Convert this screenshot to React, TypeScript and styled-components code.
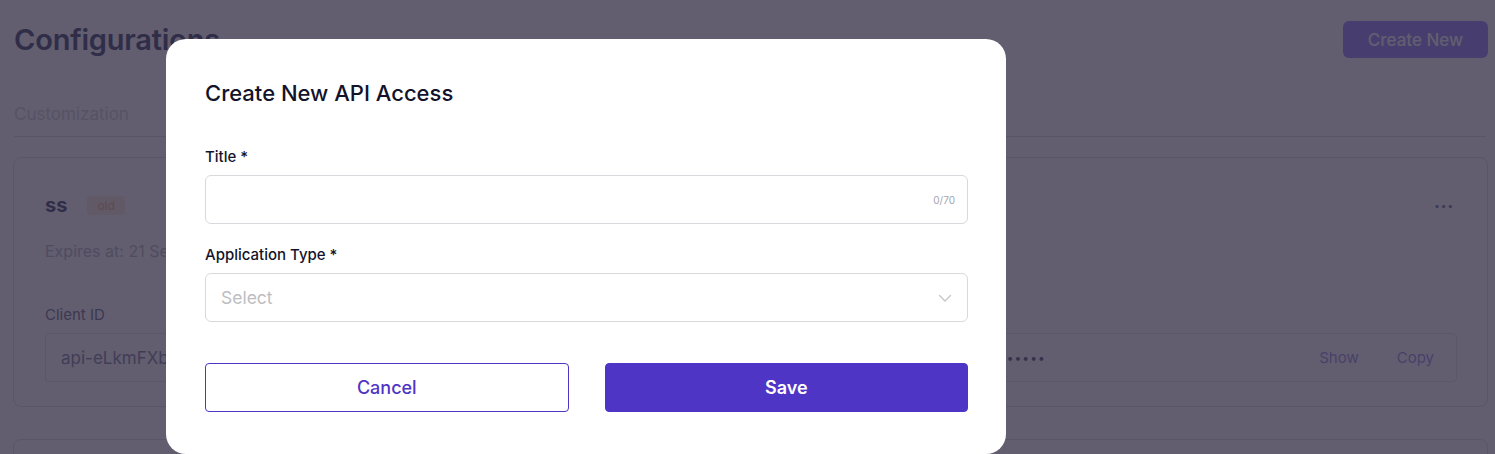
import * as React from 'react';
import styled, { createGlobalStyle } from 'styled-components';

const GlobalStyle = createGlobalStyle`
    html, body {
        margin: 0;
        padding: 0;
        background: #ffffff;
        font-family: 'Inter', 'Noto Sans', sans-serif;
        overflow: hidden;
    }
    * { box-sizing: border-box; }
`;

const ChevronDown = () => (
    <svg width="16" height="16" viewBox="0 0 16 16" fill="none">
        <path d="M2.5 5.5 8 11l5.5-5.5" stroke="#c4c4c8" strokeWidth="1.3" strokeLinecap="round" strokeLinejoin="round" />
    </svg>
);

const App = () => (
    <>
        <GlobalStyle />
        <StyledPage>
            <StyledHeader>
                <StyledHeading>Configurations</StyledHeading>
                <StyledCreateButton>Create New</StyledCreateButton>
            </StyledHeader>
            <StyledTabs>
                <StyledTab>Customization</StyledTab>
            </StyledTabs>
            <StyledCard>
                <StyledCardTop>
                    <StyledCardTitle>ss</StyledCardTitle>
                    <StyledBadge>old</StyledBadge>
                    <StyledMore>•••</StyledMore>
                </StyledCardTop>
                <StyledExpires>Expires at: 21 Sep</StyledExpires>
                <StyledFields>
                    <StyledFieldCol>
                        <StyledFieldLabel>Client ID</StyledFieldLabel>
                        <StyledValueBox>
                            <StyledValue>api-eLkmFXb2QhR7</StyledValue>
                        </StyledValueBox>
                    </StyledFieldCol>
                    <StyledFieldCol>
                        <StyledFieldLabel>Client Secret</StyledFieldLabel>
                        <StyledValueBox>
                            <StyledDots>••••••••••••••••••••••••••••••••••</StyledDots>
                            <StyledLink>Show</StyledLink>
                            <StyledLink>Copy</StyledLink>
                        </StyledValueBox>
                    </StyledFieldCol>
                </StyledFields>
            </StyledCard>
            <StyledCard />
        </StyledPage>

        <StyledOverlay>
            <StyledModal>
                <StyledModalTitle>Create New API Access</StyledModalTitle>
                <StyledFormGroup>
                    <StyledLabel>Title *</StyledLabel>
                    <StyledInputWrap>
                        <StyledInput />
                        <StyledCounter>0/70</StyledCounter>
                    </StyledInputWrap>
                </StyledFormGroup>
                <StyledFormGroup>
                    <StyledLabel>Application Type *</StyledLabel>
                    <StyledSelect>
                        <StyledPlaceholder>Select</StyledPlaceholder>
                        <ChevronDown />
                    </StyledSelect>
                </StyledFormGroup>
                <StyledActions>
                    <StyledButton type="button">Cancel</StyledButton>
                    <StyledButton type="button" primary>Save</StyledButton>
                </StyledActions>
            </StyledModal>
        </StyledOverlay>
    </>
);

export default App;

const StyledPage = styled.div`
    height: 454px;
    padding: 21px 7px 0 14px;
    overflow: hidden;
`;

const StyledHeader = styled.div`
    display: flex;
    align-items: center;
    justify-content: space-between;
    height: 37px;
`;

const StyledHeading = styled.h1`
    margin: 0;
    font-size: 29px;
    font-weight: 600;
    letter-spacing: -0.2px;
    color: #6c708c;
`;

const StyledCreateButton = styled.button`
    width: 145px;
    height: 37px;
    border: 0;
    border-radius: 6px;
    background: #b0a2ff;
    color: #ffffff;
    font-family: inherit;
    font-size: 17px;
    font-weight: 500;
`;

const StyledTabs = styled.div`
    display: flex;
    margin-top: 46px;
    margin-right: 2px;
    border-bottom: 1px solid #e4e4ea;
`;

const StyledTab = styled.div`
    padding-bottom: 12px;
    font-size: 17px;
    color: #dcdce4;
`;

const StyledCard = styled.div`
    margin-top: 20px;
    margin-left: -1px;
    height: 250px;
    padding: 35px 30px 0 31px;
    border: 1px solid #e6e6ee;
    border-radius: 8px;
    & + & {
        margin-top: 32px;
    }
`;

const StyledCardTop = styled.div`
    display: flex;
    align-items: center;
    gap: 20px;
    height: 24px;
`;

const StyledCardTitle = styled.div`
    font-size: 20px;
    font-weight: 700;
    color: #6e7190;
`;

const StyledBadge = styled.div`
    padding: 2px 10px;
    border-radius: 3px;
    background: #fff0e4;
    color: #f3c3a7;
    font-size: 12px;
`;

const StyledMore = styled.div`
    margin-left: auto;
    margin-right: 3px;
    font-size: 10px;
    letter-spacing: 1px;
    color: #9598b0;
`;

const StyledExpires = styled.div`
    margin-top: 24px;
    font-size: 16px;
    color: #c8c9d4;
`;

const StyledFields = styled.div`
    display: grid;
    grid-template-columns: 1fr 1fr;
    gap: 24px;
    margin-top: 44px;
`;

const StyledFieldCol = styled.div`
    display: flex;
    flex-direction: column;
    gap: 9px;
`;

const StyledFieldLabel = styled.div`
    font-size: 15px;
    color: #8f92a8;
`;

const StyledValueBox = styled.div`
    display: flex;
    align-items: center;
    height: 49px;
    padding: 0 22px 0 15px;
    border: 1px solid #eaeaf0;
    border-radius: 4px;
`;

const StyledValue = styled.div`
    font-size: 17px;
    color: #9da0b8;
`;

const StyledDots = styled.div`
    flex: 1;
    font-size: 12px;
    letter-spacing: 1.1px;
    color: #7c7f99;
`;

const StyledLink = styled.div`
    margin-left: 38px;
    font-size: 15px;
    color: #b4aaf0;
`;

const StyledOverlay = styled.div`
    position: fixed;
    inset: 0;
    background: rgba(16, 10, 36, 0.66);
`;

const StyledModal = styled.div`
    position: absolute;
    left: 166px;
    top: 39px;
    width: 840px;
    height: 415px;
    display: flex;
    flex-direction: column;
    padding: 40px 38px 0 39px;
    background: #ffffff;
    border-radius: 20px;
`;

const StyledModalTitle = styled.h2`
    margin: 0 0 41px;
    height: 28px;
    line-height: 28px;
    font-size: 22px;
    font-weight: 500;
    color: #13132b;
`;

const StyledFormGroup = styled.div`
    display: flex;
    flex-direction: column;
    gap: 9px;
    & + & {
        margin-top: 22px;
    }
`;

const StyledLabel = styled.label`
    font-size: 15px;
    line-height: 18px;
    font-weight: 500;
    color: #13132b;
`;

const StyledInputWrap = styled.div`
    display: flex;
    align-items: center;
    height: 49px;
    padding: 0 12px 0 15px;
    border: 1px solid #d9d9dd;
    border-radius: 6px;
`;

const StyledInput = styled.input`
    flex: 1;
    border: 0;
    outline: none;
    font-family: inherit;
    font-size: 16px;
    background: transparent;
`;

const StyledCounter = styled.span`
    font-size: 10px;
    color: #a4a4ac;
`;

const StyledSelect = styled.div`
    display: flex;
    align-items: center;
    justify-content: space-between;
    height: 49px;
    padding: 0 14px 0 15px;
    border: 1px solid #d9d9dd;
    border-radius: 6px;
`;

const StyledPlaceholder = styled.span`
    font-size: 17.5px;
    color: #bdbdc2;
`;

const StyledActions = styled.div`
    display: grid;
    grid-template-columns: 1fr 1fr;
    gap: 36px;
    margin-top: 41px;
`;

const StyledButton = styled.button<{ primary?: boolean }>`
    height: 49px;
    border-radius: 4px;
    border: 1px solid #4f35c6;
    background: ${p => (p.primary ? '#4f35c6' : '#ffffff')};
    color: ${p => (p.primary ? '#ffffff' : '#4f35c6')};
    font-family: inherit;
    font-size: 18px;
    font-weight: ${p => (p.primary ? 600 : 500)};
    cursor: pointer;
`;
